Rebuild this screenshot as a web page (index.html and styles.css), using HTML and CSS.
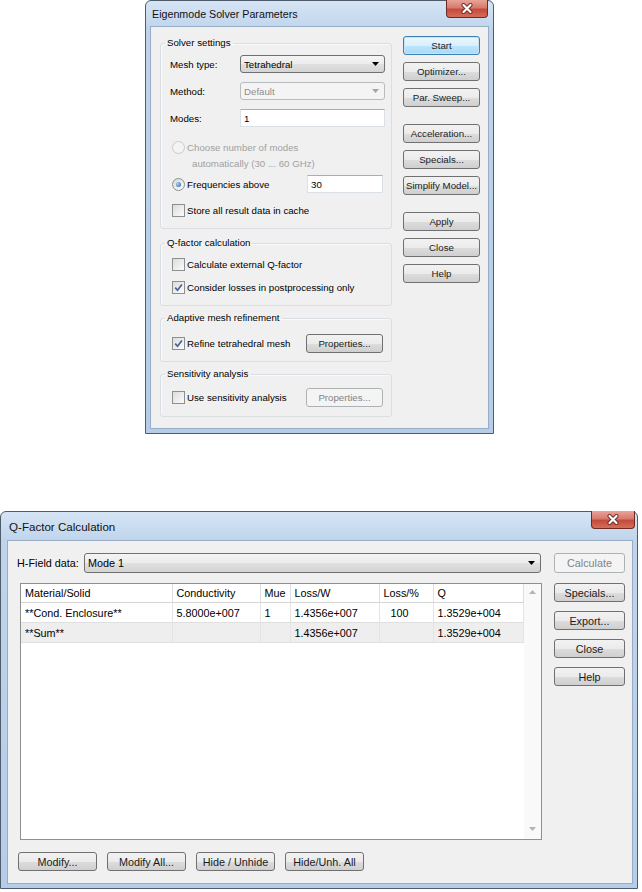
FILE: index.html
```html
<!DOCTYPE html>
<html lang="en">

<head>
    <meta charset="UTF-8">
    <title>Eigenmode Solver Parameters</title>
    <link rel="stylesheet" href="styles.css">
</head>

<body>

    <!-- Eigenmode solver dialog -->
    <div class="window solver">
        <div class="titlebar">
            <span class="title">Eigenmode Solver Parameters</span>
            <div class="close-x">
                <svg width="14" height="11" viewBox="0 0 14 11">
                    <path d="M3.5 2 L10.5 9 M10.5 2 L3.5 9" stroke="#6a2b25" stroke-width="4" stroke-linecap="round" />
                    <path d="M3.5 2 L10.5 9 M10.5 2 L3.5 9" stroke="#ffffff" stroke-width="2.2" stroke-linecap="round" />
                </svg>
            </div>
        </div>
        <div class="client solver-body">
            <div class="settings">
                <fieldset class="group">
                    <legend>Solver settings</legend>
                    <div class="row first">
                        <span class="lbl">Mesh type:</span>
                        <div class="combo">
                            <span>Tetrahedral</span>
                            <svg class="arrow" width="7" height="4" viewBox="0 0 7 4"><path d="M0 0H7L3.5 4Z" /></svg>
                        </div>
                    </div>
                    <div class="row">
                        <span class="lbl">Method:</span>
                        <div class="combo disabled">
                            <span>Default</span>
                            <svg class="arrow" width="7" height="4" viewBox="0 0 7 4"><path d="M0 0H7L3.5 4Z" /></svg>
                        </div>
                    </div>
                    <div class="row">
                        <span class="lbl">Modes:</span>
                        <div class="field">1</div>
                    </div>
                    <div class="choice">
                        <div class="choice-line">
                            <span class="radio dim"></span>
                            <span>Choose number of modes</span>
                        </div>
                        <div class="choice-line sub">automatically (30 ... 60 GHz)</div>
                    </div>
                    <div class="row freq">
                        <span class="radio on"></span>
                        <span>Frequencies above</span>
                        <div class="field short">30</div>
                    </div>
                    <div class="check-row store">
                        <span class="box"></span>
                        <span>Store all result data in cache</span>
                    </div>
                </fieldset>

                <fieldset class="group">
                    <legend>Q-factor calculation</legend>
                    <div class="check-row q-first">
                        <span class="box"></span>
                        <span>Calculate external Q-factor</span>
                    </div>
                    <div class="check-row q-second">
                        <span class="box">
                            <svg width="9" height="9" viewBox="0 0 9 9"><path d="M1.2 4.6 L3.5 7.2 L7.9 1.4" fill="none" stroke="#4a5f97" stroke-width="1.7" /></svg>
                        </span>
                        <span>Consider losses in postprocessing only</span>
                    </div>
                </fieldset>

                <fieldset class="group slim">
                    <legend>Adaptive mesh refinement</legend>
                    <div class="prop-row">
                        <div class="check-line">
                            <span class="box">
                                <svg width="9" height="9" viewBox="0 0 9 9"><path d="M1.2 4.6 L3.5 7.2 L7.9 1.4" fill="none" stroke="#4a5f97" stroke-width="1.7" /></svg>
                            </span>
                            <span>Refine tetrahedral mesh</span>
                        </div>
                        <button class="btn prop">Properties...</button>
                    </div>
                </fieldset>

                <fieldset class="group slim last">
                    <legend>Sensitivity analysis</legend>
                    <div class="prop-row tight">
                        <div class="check-line">
                            <span class="box"></span>
                            <span>Use sensitivity analysis</span>
                        </div>
                        <button class="btn prop" disabled>Properties...</button>
                    </div>
                </fieldset>
            </div>

            <div class="actions">
                <button class="btn default">Start</button>
                <button class="btn">Optimizer...</button>
                <button class="btn">Par. Sweep...</button>
                <button class="btn spaced">Acceleration...</button>
                <button class="btn">Specials...</button>
                <button class="btn">Simplify Model...</button>
                <button class="btn spaced">Apply</button>
                <button class="btn">Close</button>
                <button class="btn">Help</button>
            </div>
        </div>
    </div>

    <!-- Q-factor result dialog -->
    <div class="window qfactor">
        <div class="titlebar">
            <span class="title">Q-Factor Calculation</span>
            <div class="close-x">
                <svg width="14" height="11" viewBox="0 0 14 11">
                    <path d="M3.5 2 L10.5 9 M10.5 2 L3.5 9" stroke="#6a2b25" stroke-width="4" stroke-linecap="round" />
                    <path d="M3.5 2 L10.5 9 M10.5 2 L3.5 9" stroke="#ffffff" stroke-width="2.2" stroke-linecap="round" />
                </svg>
            </div>
        </div>
        <div class="client qf-body">
            <div class="hfield">
                <span class="hlbl">H-Field data:</span>
                <div class="combo tall">
                    <span>Mode 1</span>
                    <svg class="arrow" width="7" height="4" viewBox="0 0 7 4"><path d="M0 0H7L3.5 4Z" /></svg>
                </div>
            </div>
            <button class="btn tall" disabled>Calculate</button>

            <div class="list">
                <table class="grid">
                    <colgroup>
                        <col class="c-mat">
                        <col class="c-cond">
                        <col class="c-mue">
                        <col class="c-loss">
                        <col class="c-pct">
                        <col class="c-q">
                    </colgroup>
                    <thead>
                        <tr>
                            <th>Material/Solid</th>
                            <th>Conductivity</th>
                            <th>Mue</th>
                            <th>Loss/W</th>
                            <th>Loss/%</th>
                            <th>Q</th>
                        </tr>
                    </thead>
                    <tbody>
                        <tr>
                            <td>**Cond. Enclosure**</td>
                            <td>5.8000e+007</td>
                            <td>1</td>
                            <td>1.4356e+007</td>
                            <td class="pct">100</td>
                            <td>1.3529e+004</td>
                        </tr>
                        <tr class="sum">
                            <td>**Sum**</td>
                            <td></td>
                            <td></td>
                            <td>1.4356e+007</td>
                            <td></td>
                            <td>1.3529e+004</td>
                        </tr>
                    </tbody>
                </table>
                <div class="vscroll">
                    <svg width="7" height="4" viewBox="0 0 7 4"><path d="M0 4H7L3.5 0Z" /></svg>
                    <svg width="7" height="4" viewBox="0 0 7 4"><path d="M0 0H7L3.5 4Z" /></svg>
                </div>
            </div>

            <div class="side">
                <button class="btn">Specials...</button>
                <button class="btn">Export...</button>
                <button class="btn">Close</button>
                <button class="btn">Help</button>
            </div>

            <div class="bottom">
                <button class="btn">Modify...</button>
                <button class="btn">Modify All...</button>
                <button class="btn">Hide / Unhide</button>
                <button class="btn">Hide/Unh. All</button>
            </div>
        </div>
    </div>

</body>

</html>
```

FILE: styles.css
```css
body {
    margin: 0;
    background: #ffffff;
    font-family: "Liberation Sans", Arial, sans-serif;
    color: #000000;
}

/* Window frame */
.window {
    box-sizing: border-box;
    border: 1px solid #4f5c6b;
    border-radius: 6px 6px 0 0;
    background: linear-gradient(180deg, #d6e5f5 0%, #bfd4ec 28px, #b5cde8 100%);
}

.solver {
    width: 349px;
    margin-left: 145px;
    padding: 0 4px 4px 4px;
    font-size: 9.7px;
}

.qfactor {
    width: 638px;
    margin-top: 77px;
    padding: 0 4px 4px 6px;
    font-size: 10.8px;
}

.titlebar {
    display: flex;
    justify-content: space-between;
    align-items: center;
    height: 25px;
}

.qfactor .titlebar {
    height: 28px;
}

.title {
    padding-left: 2px;
    font-size: 10.7px;
    color: #111111;
}

.qfactor .title {
    font-size: 11.6px;
}

.close-x {
    box-sizing: border-box;
    align-self: flex-start;
    width: 42px;
    height: 18px;
    margin-top: -1px;
    margin-right: 1px;
    display: flex;
    align-items: center;
    justify-content: center;
    border: 1px solid #6b2a24;
    border-top: none;
    border-radius: 0 0 4px 4px;
    background: linear-gradient(180deg, #e9a397 0%, #d67b6e 45%, #c54a3c 55%, #d56d58 100%);
}

.qfactor .close-x {
    width: 44px;
    margin-right: -2px;
}

.client {
    box-sizing: border-box;
    background: #f0f0f0;
    border: 1px solid #98adc4;
}

/* Solver dialog body */
.solver-body {
    display: flex;
    gap: 11px;
    height: 403px;
    padding: 9px 8px 0 9px;
}

.settings {
    width: 232px;
}

.group {
    margin: 8px 0 0 0;
    padding: 0 6px 11px 9px;
    border: 1px solid #d8dee4;
    border-radius: 3px;
    box-shadow: inset 1px 1px 0 #fafafa;
    min-width: 0;
}

.group:first-child {
    margin-top: 1px;
}

.group.slim {
    margin-top: 6px;
    padding-bottom: 8px;
}

.group.last {
    padding-bottom: 9px;
}

.group legend {
    padding: 0 2px;
    margin-left: -5px;
    line-height: 12px;
    height: 12px;
}

.row {
    display: flex;
    align-items: center;
    height: 18px;
    margin-top: 9px;
}

.row.first {
    margin-top: 6px;
}

.lbl {
    width: 70px;
    flex-shrink: 0;
}

.combo {
    box-sizing: border-box;
    flex: 1;
    height: 18px;
    display: flex;
    align-items: center;
    justify-content: space-between;
    padding: 0 5px 0 3px;
    border: 1px solid #707070;
    border-radius: 3px;
    background: linear-gradient(180deg, #f4f4f4 0%, #ececec 50%, #e0e0e0 51%, #d4d4d4 100%);
    color: #000000;
}

.combo.disabled {
    border-color: #b8bcbf;
    background: #f4f4f4;
    color: #8d8d8d;
}

.combo.disabled .arrow {
    fill: #a6a6a6;
}

.combo.tall {
    height: 20px;
}

.field {
    box-sizing: border-box;
    flex: 1;
    height: 18px;
    display: flex;
    align-items: center;
    padding: 0 3px;
    background: #ffffff;
    border: 1px solid #dbdfe6;
    border-top-color: #abadb3;
}

.field.short {
    flex: none;
    width: 76px;
    margin-left: auto;
    margin-right: 2px;
}

.choice {
    margin-top: 12px;
    color: #a0a0a0;
}

.choice-line {
    display: flex;
    align-items: center;
    height: 16px;
}

.choice-line.sub {
    padding-left: 22px;
}

.row.freq {
    margin-top: 4px;
}

.radio {
    box-sizing: border-box;
    width: 13px;
    height: 13px;
    margin: 0 2px 0 2px;
    flex-shrink: 0;
    border-radius: 50%;
    border: 1px solid #8e8f8f;
    background: linear-gradient(135deg, #d8d8d8, #fcfcfc);
    display: flex;
    align-items: center;
    justify-content: center;
}

.radio.dim {
    border-color: #cacaca;
    background: #f4f4f4;
}

.radio.on::after {
    content: "";
    width: 5px;
    height: 5px;
    border-radius: 50%;
    background: radial-gradient(circle at 35% 35%, #a7d6f7, #1d5ba8);
}

.check-row {
    display: flex;
    align-items: center;
    height: 13px;
}

.check-row.store {
    margin-top: 11px;
}

.check-row.q-first {
    margin-top: 9px;
}

.check-row.q-second {
    margin-top: 10px;
}

.box {
    box-sizing: border-box;
    width: 13px;
    height: 13px;
    margin: 0 2px 0 2px;
    flex-shrink: 0;
    border: 1px solid #8e8f8f;
    background: linear-gradient(135deg, #dcdcdc, #fbfbfb);
    display: flex;
    align-items: center;
    justify-content: center;
}

.check-line {
    display: flex;
    align-items: center;
}

.prop-row {
    display: flex;
    align-items: center;
    justify-content: space-between;
    height: 19px;
    margin-top: 10px;
}

.prop-row.tight {
    margin-top: 8px;
}

/* Buttons */
.btn {
    box-sizing: border-box;
    height: 19px;
    padding: 0;
    font: inherit;
    font-weight: 400;
    color: #1a1a1a;
    text-align: center;
    white-space: nowrap;
    border: 1px solid #707070;
    border-radius: 3px;
    background: linear-gradient(180deg, #f2f2f2 0%, #ebebeb 50%, #dddddd 51%, #cfcfcf 100%);
}

.btn.default {
    border-color: #3c7fb1;
    background: linear-gradient(180deg, #eaf6fd 0%, #d9f0fc 50%, #bee6fd 51%, #a7d9f5 100%);
    box-shadow: inset 0 0 0 1px #c4e5f6;
}

.btn:disabled {
    border-color: #adb2b5;
    background: #f4f4f4;
    color: #838383;
}

.btn.prop {
    width: 77px;
    margin-right: 2px;
}

.btn.tall {
    height: 20px;
}

.actions {
    width: 77px;
    display: flex;
    flex-direction: column;
    gap: 7px;
}

.actions .btn.spaced {
    margin-top: 10px;
}

/* Q-factor dialog body */
.qf-body {
    display: grid;
    grid-template-columns: 524px 71px;
    grid-template-rows: 20px 257px 19px;
    column-gap: 12px;
    row-gap: 10px;
    height: 344px;
    padding: 12px 7px 0 10px;
}

.hfield {
    display: flex;
    align-items: center;
}

.hlbl {
    width: 67px;
    margin-left: -1px;
    flex-shrink: 0;
}

.hfield .combo {
    margin-right: 1px;
}

.list {
    box-sizing: border-box;
    display: flex;
    margin-left: 2px;
    border: 1px solid #8e8f8f;
    background: #ffffff;
}

.grid {
    width: 502px;
    table-layout: fixed;
    border-collapse: collapse;
    align-self: flex-start;
}

.c-mat {
    width: 151px;
}

.c-cond {
    width: 88px;
}

.c-mue {
    width: 30px;
}

.c-loss {
    width: 89px;
}

.c-pct {
    width: 54px;
}

.c-q {
    width: 90px;
}

th,
td {
    padding: 0 4px;
    text-align: left;
    white-space: nowrap;
    overflow: hidden;
}

th {
    height: 18px;
    font-weight: normal;
    border-right: 1px solid #dcdfe3;
    border-bottom: 1px solid #d5d5d5;
}

td {
    height: 19px;
    border-right: 1px solid #e4e4e4;
    border-bottom: 1px solid #e0e0e0;
}

td.pct {
    padding-left: 11px;
}

tr.sum td {
    background: #eeeeee;
}

.vscroll {
    box-sizing: border-box;
    width: 18px;
    margin-left: auto;
    display: flex;
    flex-direction: column;
    justify-content: space-between;
    align-items: center;
    padding: 6px 0 8px 0;
    background: #f9f9f9;
    fill: #b4b4b4;
}

.side {
    display: flex;
    flex-direction: column;
    gap: 9px;
}

.bottom {
    display: flex;
    gap: 10px;
    margin-top: 2px;
    grid-column: 1 / 3;
}

.bottom .btn {
    width: 79px;
}
```
